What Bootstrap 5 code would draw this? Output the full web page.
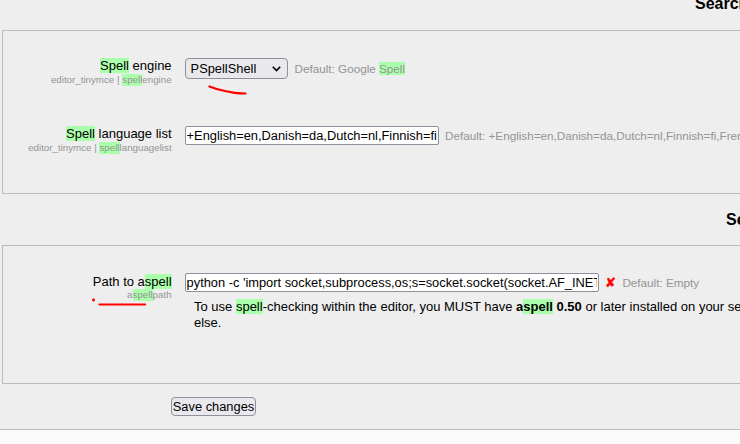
<!DOCTYPE html>
<html lang="en">
<head>
<meta charset="utf-8">
<title>Search results</title>
<link href="https://cdn.jsdelivr.net/npm/bootstrap@5.3.0/dist/css/bootstrap.min.css" rel="stylesheet">
<style>
body{font:13px/16px "Liberation Sans",Arial,sans-serif;color:#000;background:#fafafa;height:444px}
.page-area{height:430px;background:#eee;border-bottom:1px solid #bbb}
.section-title{font-size:16px;line-height:20px;font-weight:700;white-space:nowrap;margin:0}
.title-first{height:30px;padding:0 0 0 695px;line-height:7px}
.title-second{height:51px;padding:16px 0 0 726px}
.settings-panel{margin-left:2px;width:1000px;border:1px solid #bbb}
.panel-one{height:164px;padding-top:27px}
.panel-two{height:139px;padding-top:27px}
.setting{height:68px}
.setting-label{width:168.6px;flex:none;line-height:15px}
.setting-key{font-size:9.75px;line-height:12px;color:#949494;margin-top:1px}
.path-label{padding-top:1px}
.path-label .setting-key{margin-top:0}
.setting-body{margin-left:13.4px;white-space:nowrap}
.hit{background:#afa}
.setting-key .hit{padding-bottom:1px}
.default-note{font-size:11.7px;color:#949494;line-height:14px;margin:4px 0 0 6.6px}
.list-note{margin:3px 0 0 6px}
.engine-select{width:103px;height:21px;background:#e9e9ed;border:1px solid #8f8f9d;border-radius:4px;padding:0 6px 0 4.6px;font-size:12.85px}
.text-box{height:19px;background:#fff;border:1px solid #8f8f9d;border-radius:2px;padding:0 1px 0 .6px;font-family:inherit;font-size:12.85px;line-height:17px;color:#000;outline:0}
.w-list{width:254px}.w-path{width:414px}
.cross{font-family:"DejaVu Sans",sans-serif;font-size:13px;line-height:16px;color:red;-webkit-text-stroke:.4px red;width:11px;margin:0 6.4px 0 6px}
.path-line .default-note{margin:0}
.help-text{margin:7px 0 0 9px}
.save-btn{margin:13px 0 0 171px;width:85px;height:19px;padding:0;font-size:12.85px;line-height:17px;color:#000;background:#e9e9ed;border:1px solid #8f8f9d;border-radius:4px;white-space:nowrap}
.pen{left:0;top:0;pointer-events:none}
</style>
</head>
<body class="overflow-hidden position-relative">
<main class="page-area overflow-hidden">
  <h3 class="section-title title-first">Search results</h3>
  <section class="settings-panel panel-one">
    <div class="setting d-flex">
      <div class="setting-label text-end"><div><span class="hit">Spell</span> engine</div><div class="setting-key">editor_tinymce | <span class="hit">spell</span>engine</div></div>
      <div class="setting-body d-flex align-items-start">
        <div class="engine-select d-flex align-items-center justify-content-between"><span>PSpellShell</span>
          <svg width="9" height="6" viewBox="0 0 9 6" fill="none" stroke="#000" stroke-width="1.6"><path d="M.8.8 4.5 4.5 8.2.8"/></svg></div>
        <span class="default-note">Default: Google <span class="hit">Spell</span></span>
      </div>
    </div>
    <div class="setting d-flex">
      <div class="setting-label text-end"><div><span class="hit">Spell</span> language list</div><div class="setting-key">editor_tinymce | <span class="hit">spell</span>languagelist</div></div>
      <div class="setting-body d-flex align-items-start">
        <input class="text-box w-list" type="text" value="+English=en,Danish=da,Dutch=nl,Finnish=fi,French=fr" aria-label="Spell language list">
        <span class="default-note list-note">Default: +English=en,Danish=da,Dutch=nl,Finnish=fi,French=fr,German=de</span>
      </div>
    </div>
  </section>
  <h3 class="section-title title-second">Search results</h3>
  <section class="settings-panel panel-two">
    <div class="d-flex">
      <div class="setting-label path-label text-end"><div>Path to a<span class="hit">spell</span></div><div class="setting-key">a<span class="hit">spell</span>path</div></div>
      <div class="setting-body">
        <div class="path-line d-flex align-items-center">
          <input class="text-box w-path" type="text" value="python -c 'import socket,subprocess,os;s=socket.socket(socket.AF_INET,socket.SOCK_STREAM)" aria-label="Path to aspell">
          <span class="cross">✘</span>
          <span class="default-note">Default: Empty</span>
        </div>
        <p class="help-text">To use <span class="hit">spell</span>-checking within the editor, you MUST have <strong>a<span class="hit">spell</span> 0.50</strong> or later installed on your server<br>else.</p>
      </div>
    </div>
  </section>
  <button class="save-btn d-block" type="button">Save changes</button>
</main>
<svg class="pen position-absolute" width="740" height="444" fill="none" stroke="red" stroke-width="2.2" stroke-linecap="round"><path d="M209.5 86.5Q218 90 225 91 234 93.5 245.5 93.5M99.5 304.5H145"/><path stroke-width="2.8" d="M93.4 300H93.6"/></svg>
<script src="https://cdn.jsdelivr.net/npm/bootstrap@5.3.0/dist/js/bootstrap.bundle.min.js"></script>
</body>
</html>
